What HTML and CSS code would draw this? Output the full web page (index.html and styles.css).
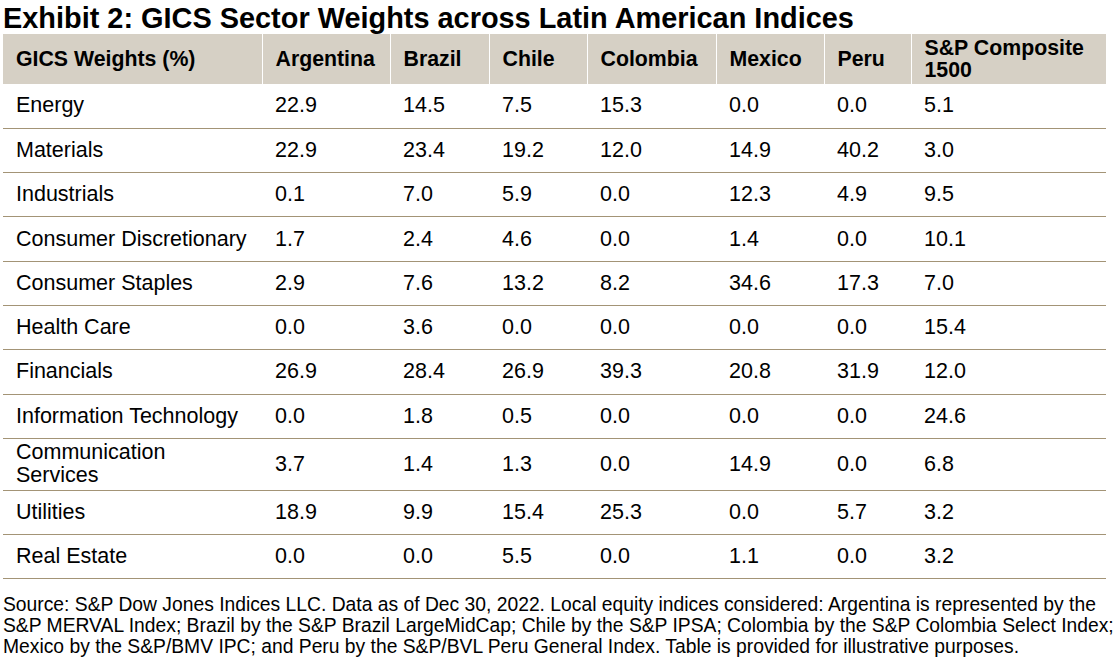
FILE: index.html
```html
<!DOCTYPE html>
<html lang="en">
<head>
<meta charset="utf-8">
<title>Exhibit 2: GICS Sector Weights across Latin American Indices</title>
<link rel="stylesheet" href="styles.css">
</head>
<body>
<div class="page">
  <h1 class="title">Exhibit 2: GICS Sector Weights across Latin American Indices</h1>
  <table class="weights">
    <colgroup>
      <col class="c-sector">
      <col class="c-arg">
      <col class="c-bra">
      <col class="c-chi">
      <col class="c-col">
      <col class="c-mex">
      <col class="c-per">
      <col class="c-sp">
    </colgroup>
    <thead>
      <tr>
        <th>GICS Weights (%)</th>
        <th>Argentina</th>
        <th>Brazil</th>
        <th>Chile</th>
        <th>Colombia</th>
        <th>Mexico</th>
        <th>Peru</th>
        <th>S&amp;P Composite 1500</th>
      </tr>
    </thead>
    <tbody>
      <tr><td>Energy</td><td>22.9</td><td>14.5</td><td>7.5</td><td>15.3</td><td>0.0</td><td>0.0</td><td>5.1</td></tr>
      <tr><td>Materials</td><td>22.9</td><td>23.4</td><td>19.2</td><td>12.0</td><td>14.9</td><td>40.2</td><td>3.0</td></tr>
      <tr><td>Industrials</td><td>0.1</td><td>7.0</td><td>5.9</td><td>0.0</td><td>12.3</td><td>4.9</td><td>9.5</td></tr>
      <tr><td>Consumer Discretionary</td><td>1.7</td><td>2.4</td><td>4.6</td><td>0.0</td><td>1.4</td><td>0.0</td><td>10.1</td></tr>
      <tr><td>Consumer Staples</td><td>2.9</td><td>7.6</td><td>13.2</td><td>8.2</td><td>34.6</td><td>17.3</td><td>7.0</td></tr>
      <tr><td>Health Care</td><td>0.0</td><td>3.6</td><td>0.0</td><td>0.0</td><td>0.0</td><td>0.0</td><td>15.4</td></tr>
      <tr><td>Financials</td><td>26.9</td><td>28.4</td><td>26.9</td><td>39.3</td><td>20.8</td><td>31.9</td><td>12.0</td></tr>
      <tr><td>Information Technology</td><td>0.0</td><td>1.8</td><td>0.5</td><td>0.0</td><td>0.0</td><td>0.0</td><td>24.6</td></tr>
      <tr class="tall"><td>Communication<br>Services</td><td>3.7</td><td>1.4</td><td>1.3</td><td>0.0</td><td>14.9</td><td>0.0</td><td>6.8</td></tr>
      <tr><td>Utilities</td><td>18.9</td><td>9.9</td><td>15.4</td><td>25.3</td><td>0.0</td><td>5.7</td><td>3.2</td></tr>
      <tr><td>Real Estate</td><td>0.0</td><td>0.0</td><td>5.5</td><td>0.0</td><td>1.1</td><td>0.0</td><td>3.2</td></tr>
    </tbody>
  </table>
  <p class="source">Source: S&amp;P Dow Jones Indices LLC. Data as of Dec 30, 2022. Local equity indices considered: Argentina is represented by the<br>S&amp;P MERVAL Index; Brazil by the S&amp;P Brazil LargeMidCap; Chile by the S&amp;P IPSA; Colombia by the S&amp;P Colombia Select Index;<br>Mexico by the S&amp;P/BMV IPC; and Peru by the S&amp;P/BVL Peru General Index. Table is provided for illustrative purposes.</p>
</div>
</body>
</html>
```

FILE: styles.css
```css
html, body {
  margin: 0;
  padding: 0;
  background: #ffffff;
}

body {
  font-family: "Liberation Sans", Arial, sans-serif;
  color: #000000;
}

.page {
  padding: 2px 0 0 3px;
}

.title {
  margin: 0;
  font-size: 28.9px;
  line-height: 32px;
  font-weight: bold;
  white-space: nowrap;
}

.weights {
  border-collapse: collapse;
  table-layout: fixed;
  width: 1103px;
}

.c-sector { width: 259px; }
.c-arg { width: 128px; }
.c-bra { width: 99px; }
.c-chi { width: 98px; }
.c-col { width: 129px; }
.c-mex { width: 108px; }
.c-per { width: 87px; }
.c-sp { width: 195px; }

.weights th {
  background: #d6d0c5;
  font-size: 21.3px;
  line-height: 22px;
  font-weight: bold;
  text-align: left;
  vertical-align: middle;
  height: 50px;
  padding: 0 13px;
  box-sizing: border-box;
  border-left: 1px solid #ffffff;
}

.weights th:first-child {
  border-left: none;
}

.weights td {
  font-size: 21.5px;
  line-height: 23px;
  text-align: left;
  vertical-align: middle;
  height: 44.3px;
  padding: 0 13px;
  box-sizing: border-box;
  border-bottom: 1px solid #a39476;
}

.weights tr.tall td {
  height: 52px;
}

.source {
  margin: 16px 0 0 0;
  font-size: 19.3px;
  line-height: 20.7px;
  white-space: nowrap;
}
```
